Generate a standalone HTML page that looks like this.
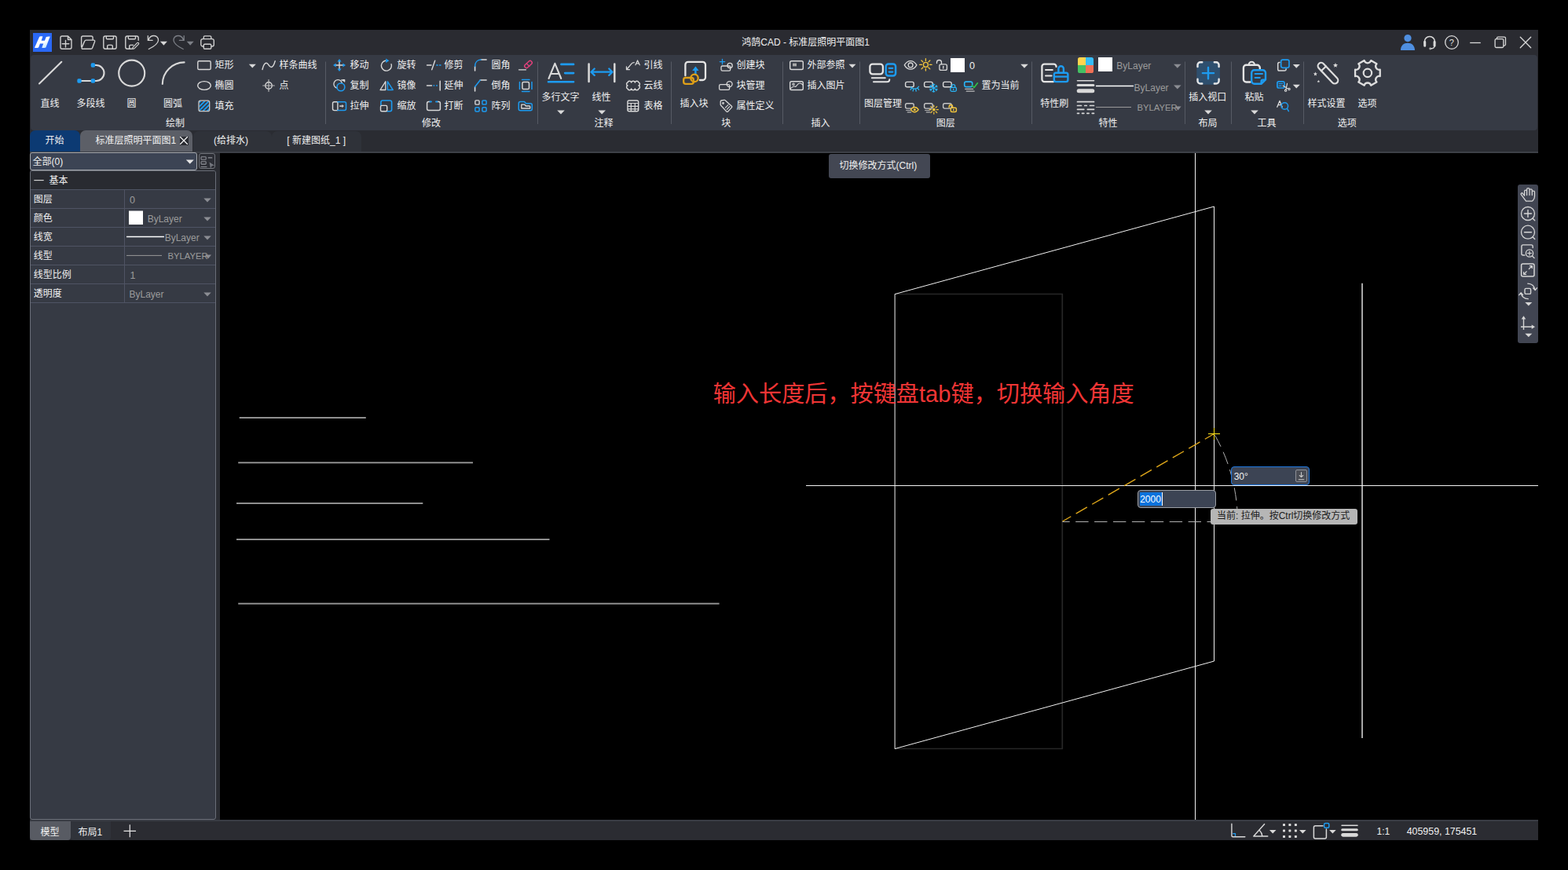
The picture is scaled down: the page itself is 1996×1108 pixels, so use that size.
<!DOCTYPE html>
<html lang="zh-CN"><head><meta charset="utf-8"><title>鸿鹄CAD - 标准层照明平面图1</title><style>
html,body{margin:0;padding:0;background:#000}
body{width:1996px;height:1108px;position:relative;overflow:hidden;font-family:"Liberation Sans",sans-serif}
#bg div,#bg2 div{position:absolute;box-sizing:border-box}
#art,#art2{position:absolute;left:0;top:0}
.l{position:absolute;white-space:nowrap;line-height:1;font-size:12px;font-family:"Liberation Sans","Noto Sans CJK SC",sans-serif}
.t{position:absolute;white-space:nowrap;line-height:1.2}
</style></head>
<body>
<div id="bg">
<div style="left:38px;top:38px;width:1920px;height:32px;background:#2a2b31;"></div>
<div style="left:38px;top:70px;width:1920px;height:96px;background:#2a2b31;"></div>
<div style="left:39px;top:70px;width:1918px;height:96px;background:#363a44;border-radius:4px"></div>
<div style="left:38px;top:166px;width:1920px;height:27px;background:#2a2c32;"></div>
<div style="left:38px;top:193px;width:1920px;height:2px;background:#3d4047;"></div>
<div style="left:38px;top:166px;width:64px;height:27px;background:#0c3a73;border-radius:7px 7px 0 0"></div>
<div style="left:102px;top:166px;width:143px;height:27px;background:#5c5f67;border-radius:7px 7px 0 0"></div>
<div style="left:246px;top:167px;width:100px;height:26px;background:#2f3239;border-radius:7px 7px 0 0"></div>
<div style="left:346px;top:167px;width:114px;height:26px;background:#2f3239;border-radius:7px 7px 0 0"></div>
<div style="left:228.5px;top:173.5px;width:11px;height:11px;background:#2a2c32;"></div>
<div style="left:38px;top:195px;width:237px;height:849px;background:#2a2c32;"></div>
<div style="left:275px;top:195px;width:5px;height:849px;background:#2a2c32;"></div>
<div style="left:38px;top:193.5px;width:213px;height:23px;background:#3c4454;border:1px solid #a3a6ab;border-radius:3px"></div>
<div style="left:252.5px;top:195px;width:21px;height:20px;background:#2c2e35;border:1px solid #70737a;border-radius:3px"></div>
<div style="left:38px;top:217px;width:237px;height:827px;background:#363a44;border:1px solid #6a6e78;border-radius:3px"></div>
<div style="left:39px;top:218px;width:235px;height:23px;background:#292b31;border-radius:2px 2px 0 0"></div>
<div style="left:39px;top:241px;width:235px;height:1px;background:#4f5464;"></div>
<div style="left:39px;top:265px;width:235px;height:1px;background:#4f5464;"></div>
<div style="left:39px;top:289px;width:235px;height:1px;background:#4f5464;"></div>
<div style="left:39px;top:313px;width:235px;height:1px;background:#4f5464;"></div>
<div style="left:39px;top:337px;width:235px;height:1px;background:#4f5464;"></div>
<div style="left:39px;top:361px;width:235px;height:1px;background:#4f5464;"></div>
<div style="left:39px;top:385px;width:235px;height:1px;background:#4f5464;"></div>
<div style="left:158px;top:241px;width:1px;height:145px;background:#4f5464;"></div>
<div style="left:38px;top:1044px;width:1920px;height:26px;background:#2b2c32;"></div>
<div style="left:38px;top:1044px;width:1920px;height:2px;background:#393c44;"></div>
<div style="left:38px;top:1046px;width:52px;height:24px;background:#585b63;border-radius:0 0 4px 4px"></div>
<div style="left:90px;top:1046px;width:51px;height:24px;background:#30333a;border-radius:0 0 4px 4px"></div>
</div>
<svg id="art" width="1996" height="1108" viewBox="0 0 1996 1108" fill="none" stroke-linecap="round" stroke-linejoin="round">
<g stroke-width="1" shape-rendering="auto">
<path d="M1139.5 374.5H1352.3V953.5H1139.5" stroke="#272727" stroke-width="1.700"/>
<path d="M304.7 532H465.8" stroke="#8f8f8f" stroke-width="2" stroke-linecap="butt"/>
<path d="M303.2 589.2H602" stroke="#8f8f8f" stroke-width="2" stroke-linecap="butt"/>
<path d="M301 641H538.3" stroke="#8f8f8f" stroke-width="2" stroke-linecap="butt"/>
<path d="M301 687H699.5" stroke="#8f8f8f" stroke-width="2" stroke-linecap="butt"/>
<path d="M303.2 768.7H915.6" stroke="#8f8f8f" stroke-width="2" stroke-linecap="butt"/>
<path d="M1734 360.7V940" stroke="#a6a6a6" stroke-width="2" stroke-linecap="butt"/>
<path d="M1139.5 374.5L1545.5 263V842L1139.5 953.5Z" stroke="#f2f2f2" stroke-linejoin="miter"/>
<path d="M1521.5 195V1044M1026 618.5H1958" stroke="#f2f2f2" stroke-linecap="butt"/>
<path d="M1352.5 664L1545.5 552.5" stroke="#e0a81a" stroke-width="1.4" stroke-dasharray="16.4 7.300" stroke-dashoffset="3.900" stroke-linecap="butt"/>
<path d="M1352.5 664.5H1541" stroke="#b0b0b0" stroke-dasharray="16.400 7.500" stroke-dashoffset="7.200" stroke-linecap="butt"/>
<path d="M1545.5 552.5A223 223 0 0 1 1575.4 664" stroke="#b0b0b0" stroke-dasharray="16.400 7.500" stroke-dashoffset="21.900" stroke-linecap="butt"/>
<path d="M1538 552.5H1553M1545.5 545V560" stroke="#ffe61a" stroke-linecap="butt"/>
</g>
<defs><linearGradient id="lg" x1="0" y1="0" x2="1" y2="1"><stop offset="0" stop-color="#fff"/><stop offset=".55" stop-color="#fff"/><stop offset="1" stop-color="#9fd8ff"/></linearGradient></defs>
<path d="M42 42h24v24h-24z" fill="#2a68f5" stroke="none"/>
<path d="M50.2 46.8c1.2-.5 3.2-.6 4.2-.2l-1.8 5.1h4.3l1.9-4.7c1.300-.600 3.400-.800 4.900-.400l-5.300 13.800c-1.400.700-3.700.800-5.100.400l2-5.300h-4.300l-1.900 4.900c-1.500.700-3.600.800-5.100.400z" fill="url(#lg)" stroke="none"/>
<path d="M79 46h7.500l4.500 4.500v9.700a2 2 0 0 1-2 2h-10a2 2 0 0 1-2-2v-12.200a2 2 0 0 1 2-2zM86.500 46.300v4.200h4.200M79.200 55.800h8.600M83.500 51.500v8.600" stroke="#cfcfcf" stroke-width="1.4"/>
<path d="M103.600 59.500v-11.500a2 2 0 0 1 2-2h10.500a2 2 0 0 1 2 2v2.200M105.700 62.200h10a2 2 0 0 0 1.900-1.300l3-8a1.300 1.300 0 0 0-1.200-1.800h-9.800a2 2 0 0 0-1.900 1.300l-3.600 8.200a1.200 1.200 0 0 0 1.600 1.600z" stroke="#cfcfcf" stroke-width="1.4"/>
<path d="M134 46h12a2.200 2.200 0 0 1 2.200 2.200v11.800a2.200 2.200 0 0 1-2.200 2.200h-12a2.200 2.200 0 0 1-2.200-2.200v-11.800a2.200 2.200 0 0 1 2.200-2.200zM135.300 46.200v2.300a1.200 1.200 0 0 0 1.200 1.200h6.800a1.200 1.200 0 0 0 1.200-1.200v-2.300M136.700 62v-3.200a1.400 1.400 0 0 1 1.400-1.400h3.800a1.400 1.400 0 0 1 1.400 1.400v3.200" stroke="#cfcfcf" stroke-width="1.4"/>
<path d="M176.200 51.300v-3.100a2.200 2.200 0 0 0-2.200-2.200h-12a2.200 2.200 0 0 0-2.200 2.200v11.800a2.200 2.200 0 0 0 2.200 2.200h5.500M163.300 46.200v2.300a1.200 1.200 0 0 0 1.200 1.200h6.800a1.200 1.200 0 0 0 1.200-1.200v-2.300M164.700 62v-3.200a1.400 1.400 0 0 1 1.400-1.400h3.400" stroke="#cfcfcf" stroke-width="1.4"/>
<path d="M168.600 62.300l.600-2.200l5.400-5.400a1.150 1.150 0 0 1 1.700 1.700l-5.400 5.400z" stroke="#cfcfcf" stroke-width="1.2"/>
<path d="M188.300 45.600v5.800h5.800M189 51c1-3.300 3.800-5.500 7-5.500c3.400 0 5.800 2.600 5.500 6c-.4 4.500-6 8-12.200 11" stroke="#cfcfcf" stroke-width="1.3"/>
<path d="M203.900 52.800h9l-4.500 4.900z" fill="#d6d6d6" stroke="none"/>
<path d="M234.200 45.600v5.800h-5.800M233.500 51c-1-3.300-3.800-5.500-7-5.500c-3.400 0-5.800 2.600-5.500 6c.4 4.500 6 8 12.200 11" stroke="#7d8087" stroke-width="1.3"/>
<path d="M237.700 52.800h9l-4.500 4.900z" fill="#7d8087" stroke="none"/>
<path d="M259.300 49.500v-2.200a1.400 1.400 0 0 1 1.400-1.400h6.700a1.400 1.400 0 0 1 1.400 1.400v2.200M259.300 59h-1.300a2.200 2.200 0 0 1-2.200-2.200v-5a2.200 2.200 0 0 1 2.200-2.200h12.100a2.200 2.200 0 0 1 2.200 2.200v5a2.200 2.200 0 0 1-2.200 2.200h-1.300M260.700 56.200h6.700a1.400 1.400 0 0 1 1.400 1.400v3.300a1.400 1.400 0 0 1-1.400 1.400h-6.700a1.400 1.400 0 0 1-1.400-1.400v-3.300a1.400 1.400 0 0 1 1.400-1.400z" stroke="#cfcfcf" stroke-width="1.4"/>
<path d="M50 106.500L78.300 78.800" stroke="#d9d9d9" stroke-width="2.1"/>
<path d="M101 103h21.500a10 10 0 0 0 0-20h-4" stroke="#d9d9d9" stroke-width="2.1"/>
<rect x="115.7" y="80.3" width="5.400" height="5.400" rx="1.600" fill="#1d9bf0" stroke="none"/>
<rect x="98.3" y="100.3" width="5.400" height="5.400" rx="1.600" fill="#1d9bf0" stroke="none"/>
<rect x="115.7" y="100.3" width="5.400" height="5.400" rx="1.600" fill="#1d9bf0" stroke="none"/>
<circle cx="167.7" cy="93.1" r="16.5" stroke="#d9d9d9" stroke-width="2.1"/>
<path d="M206.800 107a28 28 0 0 1 27.800-27.600" stroke="#d9d9d9" stroke-width="2.1"/>
<rect x="251.8" y="77.8" width="16.4" height="10.7" rx="1.6" stroke="#d9d9d9" stroke-width="1.4"/>
<ellipse cx="260" cy="109" rx="8.300" ry="5.400" stroke="#d9d9d9" stroke-width="1.400"/>
<clipPath id="hc"><rect x="253.700" y="128.900" width="12.300" height="12" rx="1"/></clipPath>
<g clip-path="url(#hc)"><path d="M248 136.200l12-12M250 139.400l16-16M253 141.600l16-16M257.500 142.300l14-14M262.700 142.300l8-8" stroke="#1d9bf0" stroke-width="1.900" stroke-linecap="butt"/></g>
<rect x="253" y="128.2" width="13.7" height="13.4" rx="2.2" stroke="#c9c9c9" stroke-width="1.3"/>
<path d="M316.8 81.7h9l-4.500 4.900z" fill="#d9d9d9" stroke="none"/>
<path d="M334 88.500c1.500-6.500 3.200-8.200 5-8.200c2.800 0 3.300 5.200 6.200 5.200c2 0 3.600-2.800 5-7.800" stroke="#d9d9d9" stroke-width="1.4"/>
<circle cx="342" cy="109" r="4.2" stroke="#d9d9d9" stroke-width="1.4"/>
<path d="M334.700 109h14.600M342 101.700v14.600" stroke="#bdbdbd" stroke-width="1.2"/>
<path d="M414.500 78.500V158" stroke="#565a64" stroke-width="1" stroke-linecap="butt"/>
<path d="M427 83h10M432 78v10" stroke="#d9d9d9" stroke-width="1.4"/>
<path d="M432 75l2.600 3.600h-5.200z" fill="#1d9bf0" stroke="none" transform="rotate(0 432 83)"/>
<path d="M432 75l2.600 3.600h-5.200z" fill="#1d9bf0" stroke="none" transform="rotate(90 432 83)"/>
<path d="M432 75l2.600 3.600h-5.200z" fill="#1d9bf0" stroke="none" transform="rotate(180 432 83)"/>
<path d="M432 75l2.600 3.600h-5.200z" fill="#1d9bf0" stroke="none" transform="rotate(270 432 83)"/>
<circle cx="430.2" cy="107" r="5.3" stroke="#d9d9d9" stroke-width="1.3"/>
<path d="M434.500 101.800c1.500.100 2.800.700 3.900 1.700M436.200 101.600h2.500v2.500" stroke="#d9d9d9" stroke-width="1.2"/>
<circle cx="433.9" cy="110.9" r="4.9" stroke="#1d9bf0" stroke-width="1.6" fill="#363a44"/>
<path d="M429.900 129.700h-4.400a2 2 0 0 0-2 2v6.900a2 2 0 0 0 2 2h4.400z" stroke="#d9d9d9" stroke-width="1.4"/>
<path d="M429.900 129.700h8.600a2 2 0 0 1 2 2v6.900a2 2 0 0 1-2 2h-8.600" stroke="#1d9bf0" stroke-width="1.5"/>
<path d="M432.200 135.100h3.300" stroke="#d9d9d9" stroke-width="1.5" stroke-linecap="butt"/>
<path d="M435.300 132.900l2.600 2.200l-2.600 2.200z" fill="#d9d9d9" stroke="none"/>
<path d="M490.500 77.300a6.500 6.500 0 1 0 7.600 4.300" stroke="#d9d9d9" stroke-width="1.4"/>
<path d="M491.200 74.600l4.200 2.700l-4.200 2.600z" fill="#1d9bf0" stroke="none"/>
<path d="M490.800 103.800v10.700h-6.800z" stroke="#d9d9d9" stroke-width="1.3"/>
<path d="M493.400 103.800v10.700h6.800z" stroke="#1d9bf0" stroke-width="1.4"/>
<path d="M484.900 134v-3.800a2.200 2.200 0 0 1 2.200-2.200h9.300a2.200 2.200 0 0 1 2.200 2.200v9.400a2.200 2.200 0 0 1-2.200 2.200h-3.500" stroke="#1d9bf0" stroke-width="1.6"/>
<rect x="484.5" y="134.4" width="8.2" height="7.4" rx="1.5" stroke="#d9d9d9" stroke-width="1.4"/>
<path d="M543.500 83h5.500M549.700 88.800l4-11.600" stroke="#d9d9d9" stroke-width="1.4"/>
<path d="M555.300 83h6.200" stroke="#1d9bf0" stroke-width="1.4" stroke-dasharray="2.400 1.400" stroke-linecap="butt"/>
<path d="M543.500 109h6M560.200 103.200v11.800" stroke="#d9d9d9" stroke-width="1.5"/>
<path d="M551.500 109h7" stroke="#1d9bf0" stroke-width="1.4" stroke-dasharray="1.800 1.800" stroke-linecap="butt"/>
<path d="M547 129.500h-1.400a2 2 0 0 0-2 2v7a2 2 0 0 0 2 2h12.800a2 2 0 0 0 2-2v-7a2 2 0 0 0-2-2h-1.400" stroke="#d9d9d9" stroke-width="1.5"/>
<path d="M547.500 129.500h1.500M555 129.500h1.500" stroke="#1d9bf0" stroke-width="1.8"/>
<path d="M604.600 84.500v5.500M612.300 76h6.800" stroke="#d9d9d9" stroke-width="1.6"/>
<path d="M604.600 84.500c0-5 3-8.500 7.700-8.500" stroke="#1d9bf0" stroke-width="1.5"/>
<path d="M604.600 110.500v5.500M611.300 102h7.800" stroke="#d9d9d9" stroke-width="1.6"/>
<path d="M604.600 110.500l6.700-8.500" stroke="#1d9bf0" stroke-width="1.5"/>
<rect x="604.9" y="127.900" width="5.2" height="5.2" rx="1.2" stroke="#d9d9d9" stroke-width="1.4"/>
<rect x="613.9" y="127.900" width="5.2" height="5.2" rx="1.2" stroke="#1d9bf0" stroke-width="1.5"/>
<rect x="604.9" y="136.700" width="5.2" height="5.2" rx="1.2" stroke="#1d9bf0" stroke-width="1.5"/>
<rect x="613.9" y="136.700" width="5.2" height="5.2" rx="1.2" stroke="#1d9bf0" stroke-width="1.5"/>
<path d="M660.500 88.800h9" stroke="#d9d9d9" stroke-width="1.3"/>
<rect x="667" y="79.600" width="11" height="4.800" rx="2.200" stroke="#e5407c" stroke-width="1.400" transform="rotate(-42 672.500 82)"/>
<path d="M670.600 81.300l3.400 3.200" stroke="#e5407c" stroke-width="1.2"/>
<rect x="664.9" y="104.500" width="8.6" height="9" rx="1.6" stroke="#d9d9d9" stroke-width="1.5"/>
<path d="M664.500 101.500h9.500M664.500 116.500h9.500M661.500 104.500v9M677 104.500v9" stroke="#1d9bf0" stroke-width="1.5"/>
<path d="M662.300 129.500h5.200l2 2.200h5.800a2 2 0 0 1 2 2v5a2 2 0 0 1-2 2h-13a2 2 0 0 1-2-2v-7.200a2 2 0 0 1 2-2z" stroke="#1d9bf0" stroke-width="1.5"/>
<path d="M663.800 138v-4.800h4l1.500 1.800h4.500a1 1 0 0 1 1 1v2z" stroke="#d9d9d9" stroke-width="1.3"/>
<path d="M684.500 78.500V158" stroke="#565a64" stroke-width="1" stroke-linecap="butt"/>
<path d="M698.500 100l7.900-19.200l7.900 19.200M701.500 94h9.800" stroke="#d9d9d9" stroke-width="2.1"/>
<path d="M714.400 81.900h15.700M719.200 93.100h10.900M698 104.300h32.100" stroke="#1d9bf0" stroke-width="2.6"/>
<path d="M709.200 140.600h9.600l-4.800 5z" fill="#d9d9d9" stroke="none"/>
<path d="M749.600 81.600v22.500M782.300 81.600v22.500" stroke="#d9d9d9" stroke-width="2.5"/>
<path d="M753 91.700h26M756.700 87.500l-4.200 4.200l4.200 4.200M775.300 87.500l4.200 4.200l-4.200 4.200" stroke="#1d9bf0" stroke-width="2.3"/>
<path d="M761.400 140.600h9.600l-4.800 5z" fill="#d9d9d9" stroke="none"/>
<path d="M797.700 88.500l6-7.200c.8-1 1.700-1.600 3.500-1.600M797.500 84.800v3.900h3.900" stroke="#d9d9d9" stroke-width="1.3"/>
<path d="M808.900 82.800l2.700-5.900l2.700 5.900M809.800 80.900h3.600" stroke="#d9d9d9" stroke-width="1.2"/>
<path d="M799 105a2.450 2.450 0 0 1 4.670 0a2.450 2.450 0 0 1 4.670 0a2.450 2.450 0 0 1 4.670 0a2.100 2.100 0 0 1 0 4a2.100 2.100 0 0 1 0 4a2.450 2.450 0 0 1-4.670 0a2.450 2.450 0 0 1-4.670 0a2.450 2.450 0 0 1-4.670 0a2.100 2.100 0 0 1 0-4a2.100 2.100 0 0 1 0-4z" stroke="#d9d9d9" stroke-width="1.4"/>
<rect x="798.9" y="128" width="13.8" height="13.8" rx="2" stroke="#d9d9d9" stroke-width="1.4"/>
<path d="M799 131.500h13.600M799 135.300h13.600M799 138.900h13.600M803.300 131.500v10.200M808.300 131.500v10.200" stroke="#d9d9d9" stroke-width="1.2" stroke-linecap="butt"/>
<path d="M854.500 78.500V158" stroke="#565a64" stroke-width="1" stroke-linecap="butt"/>
<path d="M872.400 96.300v-13.900a3.500 3.500 0 0 1 3.500-3.500h18.600a3.500 3.500 0 0 1 3.500 3.500v16.100a3.500 3.500 0 0 1-3.500 3.500h-3.600" stroke="#e4e4e4" stroke-width="2.3"/>
<path d="M885.400 94.500v-6" stroke="#1d9bf0" stroke-width="2.4"/>
<path d="M885.400 84.600l4.200 5.400h-8.400z" fill="#1d9bf0" stroke="none" stroke="#1d9bf0" stroke-width="1" stroke-linejoin="round"/>
<rect x="870.2" y="99" width="12.6" height="7.8" rx="2.6" stroke="#dfa018" stroke-width="2.3"/>
<circle cx="884" cy="99.4" r="4.7" stroke="#dfa018" stroke-width="2.3"/>
<path d="M916.300 78.600h6.400M919.500 75.400v6.400" stroke="#1d9bf0" stroke-width="1.3"/>
<rect x="918" y="84" width="11.7" height="6.1" rx="1.6" stroke="#d9d9d9" stroke-width="1.3"/>
<circle cx="929.1" cy="83.500" r="3.1" stroke="#d9d9d9" stroke-width="1.3"/>
<rect x="915.6" y="107.600" width="13" height="6.7" rx="1.6" stroke="#d9d9d9" stroke-width="1.3"/>
<circle cx="928.6" cy="107.1" r="3.5" stroke="#d9d9d9" stroke-width="1.3"/>
<path d="M917.200 129.200a1.300 1.300 0 0 1 1.100-1.200l3.600-.600a1.800 1.800 0 0 1 1.500.500l8 7.300a1.200 1.200 0 0 1 0 1.700l-4.800 5.200a1.200 1.200 0 0 1-1.700 0l-7.200-7.800a1.800 1.800 0 0 1-.5-1.300z" stroke="#d9d9d9" stroke-width="1.3"/>
<circle cx="920.5" cy="131.500" r="0.9" stroke="#d9d9d9" stroke-width="1.1"/>
<path d="M923.400 137.200l3.500-3.600M925.300 139.300l3.500-3.600" stroke="#d9d9d9" stroke-width="1.1"/>
<path d="M996.500 78.500V158" stroke="#565a64" stroke-width="1" stroke-linecap="butt"/>
<rect x="1005.7" y="77.700" width="16.6" height="10.8" rx="1.8" stroke="#d9d9d9" stroke-width="1.4"/>
<path d="M1009 80.600h5v3.800h-5z" fill="#a9a9a9" stroke="none"/>
<path d="M1080.500 81.700h9l-4.500 4.900z" fill="#d9d9d9" stroke="none"/>
<rect x="1005.7" y="103.700" width="16.6" height="10.8" rx="1.8" stroke="#d9d9d9" stroke-width="1.4"/>
<circle cx="1010" cy="107.2" r="1.2" stroke="#d9d9d9" stroke-width="1.1"/>
<path d="M1006.500 112.500c2-1.500 3.200-2.500 4.500-2.500c.8 0 1.500.600 2 .300c1-.700 2.500-4.300 5-4.300c1.500 0 3 1 4 2" stroke="#d9d9d9" stroke-width="1.2"/>
<path d="M1094.500 78.500V158" stroke="#565a64" stroke-width="1" stroke-linecap="butt"/>
<rect x="1107.4" y="81.600" width="16.5" height="12.7" rx="3.2" stroke="#e4e4e4" stroke-width="2.3"/>
<rect x="1127.7" y="81.500" width="12.4" height="15" rx="3.2" stroke="#1d9bf0" stroke-width="2.5"/>
<path d="M1131.700 86.800h4.600M1131.700 91.600h4.600" stroke="#1d9bf0" stroke-width="2.2"/>
<path d="M1109.800 99.300h17M1112 104.300h17.300c2 0 3-1.200 3-3" stroke="#e4e4e4" stroke-width="2"/>
<path d="M1151.300 82.900c2-3.400 4.700-5.300 7.800-5.300c3.100 0 5.800 1.900 7.800 5.300c-2 3.400-4.700 5.300-7.800 5.300c-3.100 0-5.800-1.900-7.800-5.300z" stroke="#d9d9d9" stroke-width="1.3"/>
<circle cx="1159.1" cy="82.900" r="2.9" stroke="#d9d9d9" stroke-width="1.3"/>
<circle cx="1178.4" cy="82.400" r="3" stroke="#f4c63c" stroke-width="1.3"/>
<path d="M1183.4 82.400L1186.1 82.400M1181.94 85.940L1183.84 87.840M1178.4 87.400L1178.4 90.1M1174.86 85.940L1172.96 87.840M1173.4 82.400L1170.7 82.400M1174.86 78.860L1172.96 76.960M1178.4 77.400L1178.4 74.700M1181.94 78.860L1183.84 76.960" stroke="#f4c63c" stroke-width="1.3"/>
<rect x="1195.9" y="81.900" width="9.5" height="7.5" rx="2" stroke="#d9d9d9" stroke-width="1.3"/>
<path d="M1200.700 84.300v2.800" stroke="#d9d9d9" stroke-width="1.3"/>
<path d="M1198.500 81.700v-2.200a3 3 0 0 0-6 0v1" stroke="#d9d9d9" stroke-width="1.3"/>
<path d="M1210 74h18v18h-18z" fill="#fff" stroke="none"/>
<path d="M1299.2 81.700h9.600l-4.800 5z" fill="#d9d9d9" stroke="none"/>
<rect x="1152.6" y="104.400" width="10.6" height="6.3" rx="2" stroke="#d9d9d9" stroke-width="1.4"/>
<path d="M1159.300 110.800c2.500 3.300 7.500 3.300 10.200-.500M1160.300 112.300l-1.300 2M1162.800 113.600l-.700 2.400M1165.700 113.700l.5 2.400M1168.300 112.300l1.400 2" stroke="#29b4f5" stroke-width="1.3"/>
<rect x="1176.6" y="104.400" width="10.6" height="6.3" rx="2" stroke="#d9d9d9" stroke-width="1.4"/>
<path d="M1188.4 106.9L1188.4 117.3M1192.9 109.5L1183.9 114.700M1192.9 114.700L1183.9 109.500M1188.4 115.320L1189.75 116.770M1188.4 115.320L1187.05 116.770M1185.61 113.710L1185.03 115.600M1185.61 113.710L1183.68 113.270M1185.61 110.490L1183.68 110.930M1185.61 110.490L1185.03 108.600M1188.4 108.880L1187.05 107.430M1188.4 108.880L1189.75 107.430M1191.19 110.490L1191.77 108.600M1191.19 110.490L1193.12 110.930M1191.19 113.710L1193.12 113.270M1191.19 113.710L1191.77 115.600" stroke="#29b4f5" stroke-width="1.1"/>
<rect x="1200.6" y="104.400" width="10.6" height="6.3" rx="2" stroke="#d9d9d9" stroke-width="1.4"/>
<rect x="1209.9" y="111.3" width="7.5" height="5" rx="1.5" stroke="#29b4f5" stroke-width="1.3"/>
<path d="M1211.700 111.200v-1.500a2 2 0 0 1 4 0v1.500M1213.700 113.200v1.200" stroke="#29b4f5" stroke-width="1.3"/>
<rect x="1227.7" y="104.1" width="10" height="6.5" rx="2" stroke="#29b4f5" stroke-width="1.6"/>
<path d="M1228.700 113.300h10M1230.200 116.100h10" stroke="#bdbdbd" stroke-width="1.3"/>
<path d="M1237.400 109l2.600 2.500l4.400-5.700" stroke="#2fc04c" stroke-width="1.7"/>
<rect x="1152.6" y="131.800" width="10.6" height="6.3" rx="2" stroke="#c6c6c6" stroke-width="1.4"/>
<path d="M1153.700 140.500h5.500M1155.200 142.800h4.500" stroke="#b5b5b5" stroke-width="1.2"/>
<path d="M1159.400 139.700c1.500-2.200 3.200-3.200 4.900-3.200c1.700 0 3.400 1 4.900 3.200c-1.500 2.200-3.200 3.200-4.900 3.200c-1.700 0-3.400-1-4.900-3.200z" stroke="#f4c63c" stroke-width="1.3" fill="#363a44"/>
<path d="M1164.300 138.200a1.500 1.500 0 1 0 .01 0z" fill="#f4c63c" stroke="none"/>
<rect x="1176.6" y="131.800" width="10.6" height="6.3" rx="2" stroke="#c6c6c6" stroke-width="1.4"/>
<path d="M1177.700 140.500h5.500M1179.200 142.800h4.500" stroke="#b5b5b5" stroke-width="1.2"/>
<path d="M1188.800 137.700a1.900 1.900 0 1 0 .01 0z" fill="#f4c63c" stroke="none"/>
<path d="M1192.2 139.600L1194.4 139.600M1191.2 142L1192.76 143.560M1188.8 143L1188.8 145.200M1186.4 142L1184.84 143.560M1185.4 139.600L1183.2 139.600M1186.4 137.200L1184.84 135.640M1188.8 136.200L1188.8 134M1191.2 137.200L1192.76 135.640" stroke="#f4c63c" stroke-width="1.2"/>
<rect x="1200.6" y="131.800" width="10.6" height="6.3" rx="2" stroke="#c6c6c6" stroke-width="1.4"/>
<rect x="1210.3" y="137.200" width="7.1" height="5.3" rx="1.5" stroke="#f4c63c" stroke-width="1.4" fill="#363a44"/>
<path d="M1212.600 137v-1.300a2.200 2.200 0 0 0-4.400 0v1.300M1213.800 139.200v1.300" stroke="#f4c63c" stroke-width="1.4"/>
<path d="M1313.500 78.500V158" stroke="#565a64" stroke-width="1" stroke-linecap="butt"/>
<path d="M1344.500 85v-.400a3 3 0 0 0-3-3h-12.100a3 3 0 0 0-3 3v16.500a3 3 0 0 0 3 3h11.600" stroke="#e4e4e4" stroke-width="2.3"/>
<path d="M1331 89.100h8.800M1331 96.500h7.600" stroke="#e4e4e4" stroke-width="2"/>
<path d="M1347.400 92.500v-5a3.200 3.200 0 0 1 6.500 0v5M1344.100 92.800h13a2.300 2.300 0 0 1 2.300 2.300v6.700a2.300 2.300 0 0 1-2.300 2.300h-13a2.300 2.300 0 0 1-2.300-2.300v-6.700a2.300 2.300 0 0 1 2.300-2.300zM1342 97.600h17" stroke="#1d9bf0" stroke-width="2.4"/>
<clipPath id="cg"><rect x="1372" y="73" width="20" height="20" rx="2.600"/></clipPath>
<g clip-path="url(#cg)" stroke="none"><rect x="1372" y="73" width="10" height="10" fill="#ffd44f"/><rect x="1382" y="73" width="10" height="10" fill="#36bdfb"/><rect x="1372" y="83" width="10" height="10" fill="#44c063"/><rect x="1382" y="83" width="10" height="10" fill="#f07055"/></g>
<path d="M1398 73h18v18h-18z" fill="#fff" stroke="none"/>
<path d="M1494 81.700h9.600l-4.800 5z" fill="#8b8d93" stroke="none"/>
<path d="M1371.500 102.700h21" stroke="#d9d9d9" stroke-width="1.6"/>
<path d="M1372.200 108.500h19.600" stroke="#d9d9d9" stroke-width="3.2"/>
<path d="M1373.200 115.700h17.600" stroke="#d9d9d9" stroke-width="5"/>
<path d="M1395 109.400h48" stroke="#ffffff" stroke-width="1.5" stroke-linecap="butt"/>
<path d="M1494 108.600h9.600l-4.800 5z" fill="#8b8d93" stroke="none"/>
<path d="M1371.500 129.700h21M1371.500 134.500h5M1380.700 134.500h2.600M1387.500 134.500h5M1371.500 139.300h8.300M1384.300 139.300h8.200M1371.500 144.300h2M1377.500 144.300h2.300M1383.800 144.300h2.300M1390.300 144.300h2.200" stroke="#d9d9d9" stroke-width="1.7"/>
<path d="M1395 136.500h45" stroke="#9a9a9a" stroke-width="1" stroke-linecap="butt"/>
<path d="M1495.600 135.600h8l-4 5z" fill="#8b8d93" stroke="none"/>
<path d="M1508.500 78.500V158" stroke="#565a64" stroke-width="1" stroke-linecap="butt"/>
<rect x="1523.300" y="78" width="29.600" height="29.700" rx="4.500" fill="#2e4f6e" stroke="none"/>
<path d="M1524.500 85v-2.300a3.500 3.500 0 0 1 3.500-3.500h2.300M1545.800 79.200h2.300a3.500 3.500 0 0 1 3.500 3.500v2.300M1551.600 100.700v2.300a3.500 3.500 0 0 1-3.500 3.500h-2.300M1530.300 106.500h-2.300a3.500 3.500 0 0 1-3.500-3.500v-2.300" stroke="#e6e6e6" stroke-width="2.4"/>
<path d="M1530.900 93.100h14.200M1538 86v14.200" stroke="#1d9bf0" stroke-width="2.4"/>
<path d="M1533.200 140.600h9.600l-4.800 5z" fill="#d9d9d9" stroke="none"/>
<path d="M1567.500 78.500V158" stroke="#565a64" stroke-width="1" stroke-linecap="butt"/>
<path d="M1603.800 87.500v-1.200a3.500 3.500 0 0 0-3.500-3.500h-13.900a3.500 3.500 0 0 0-3.500 3.500v14.700a3.500 3.500 0 0 0 3.500 3.500h5" stroke="#e4e4e4" stroke-width="2.4"/>
<path d="M1589.700 82.300a3.600 3.600 0 0 1 7.200 0" stroke="#e4e4e4" stroke-width="2"/>
<path d="M1596.700 89.300h10.800a3.500 3.500 0 0 1 3.500 3.500v8.500l-5.500 5.500h-8.800a3.500 3.500 0 0 1-3.500-3.500v-10.500a3.500 3.500 0 0 1 3.500-3.500zM1611 101.600h-3.400a2 2 0 0 0-2 2v3.200" stroke="#1d9bf0" stroke-width="2.4"/>
<path d="M1597.600 94h9.400M1597.600 99h6.200" stroke="#1d9bf0" stroke-width="2"/>
<path d="M1592.2 140.600h9.600l-4.800 5z" fill="#d9d9d9" stroke="none"/>
<path d="M1629 79.600h-.500a1.800 1.800 0 0 0-1.800 1.800v6.800a1.800 1.800 0 0 0 1.800 1.800h6.800a1.800 1.800 0 0 0 1.800-1.800v-.5" stroke="#d9d9d9" stroke-width="1.5"/>
<rect x="1630.7" y="76.1" width="10.3" height="10.2" rx="2.2" stroke="#1d9bf0" stroke-width="1.7"/>
<path d="M1645.800 82h9l-4.500 4.800z" fill="#d9d9d9" stroke="none"/>
<rect x="1625.9" y="103.800" width="9.1" height="8.2" rx="2" stroke="#1d9bf0" stroke-width="1.7"/>
<path d="M1628 106.600h4.700M1628 109.400h3" stroke="#1d9bf0" stroke-width="1.2"/>
<path d="M1633.200 109.200l6.300 3.500M1638.500 106.300l-1.500 7.600" stroke="#d9d9d9" stroke-width="1.2"/>
<circle cx="1641" cy="113.600" r="1.2" stroke="#d9d9d9" stroke-width="1.1"/>
<circle cx="1636.6" cy="115.3" r="1.2" stroke="#d9d9d9" stroke-width="1.1"/>
<path d="M1645.800 107.800h9l-4.500 4.800z" fill="#d9d9d9" stroke="none"/>
<path d="M1625.800 136.300l3.200-7.900l3.200 7.900M1627 133.700h4.100" stroke="#d9d9d9" stroke-width="1.3"/>
<circle cx="1635.3" cy="135" r="4.3" stroke="#1d9bf0" stroke-width="1.5"/>
<path d="M1638.400 138.200l2 3.400" stroke="#1d9bf0" stroke-width="1.5"/>
<path d="M1659.500 78.500V158" stroke="#565a64" stroke-width="1" stroke-linecap="butt"/>
<g transform="translate(1690.450 93.200) rotate(-43.300)" stroke="#dedede" stroke-width="2.200"><rect x="-4.150" y="-16.750" width="8.300" height="33.500" rx="4.150"/><path d="M-4.150 -8h8.300"/></g>
<path d="M1700 80L1700.85 82.040L1703.04 82.210L1701.37 83.640L1701.88 85.790L1700 84.640L1698.12 85.790L1698.63 83.640L1696.96 82.210L1699.15 82.040z" fill="#d9d9d9" stroke="none"/>
<path d="M1674.4 91.500L1675.11 93.220L1676.97 93.370L1675.56 94.580L1675.99 96.380L1674.4 95.420L1672.81 96.380L1673.24 94.580L1671.83 93.370L1673.69 93.220z" fill="#d9d9d9" stroke="none"/>
<path d="M1678.4 101.700L1678.9 102.910L1680.21 103.010L1679.21 103.860L1679.52 105.140L1678.4 104.450L1677.28 105.140L1677.59 103.860L1676.59 103.010L1677.9 102.910z" fill="#d9d9d9" stroke="none"/>
<path d="M1756.74 88.660L1756.74 97.140A4.400 4.400 0 0 0 1752.5 104.500L1752.5 104.500L1745.14 108.740A4.400 4.400 0 0 0 1736.66 108.740L1736.66 108.740L1729.3 104.500A4.400 4.400 0 0 0 1725.06 97.140L1725.06 97.140L1725.06 88.660A4.400 4.400 0 0 0 1729.3 81.300L1729.3 81.300L1736.66 77.060A4.400 4.400 0 0 0 1745.14 77.060L1745.14 77.060L1752.5 81.300A4.400 4.400 0 0 0 1756.74 88.660z" stroke="#dedede" stroke-width="2.3"/>
<circle cx="1740.9" cy="92.900" r="5.2" stroke="#dedede" stroke-width="2.2"/>
<path d="M1792 44a4.600 4.600 0 1 0 .01 0zM1783 64c0-6 4-9.200 9-9.200c5 0 9 3.200 9 9.200z" fill="#4f8fe0" stroke="none"/>
<path d="M1813.400 56v-3a6.500 6.500 0 0 1 13 0v3" stroke="#d9d9d9" stroke-width="1.5"/>
<path d="M1813.700 53.200v5M1826.100 53.200v5" stroke="#d9d9d9" stroke-width="3"/>
<path d="M1826 58.500c0 2.300-1.800 3.300-4.500 3.400" stroke="#d9d9d9" stroke-width="1.2"/>
<circle cx="1820.7" cy="61.900" r="1" stroke="#d9d9d9" stroke-width="1"/>
<circle cx="1848" cy="54" r="8.3" stroke="#d9d9d9" stroke-width="1.3"/>
<path d="M1871.200 54.500h13.600" stroke="#d9d9d9" stroke-width="1.3" stroke-linecap="butt"/>
<path d="M1905.500 49.600v-1a1.500 1.500 0 0 1 1.500-1.500h8a1.500 1.500 0 0 1 1.500 1.500v8a1.500 1.500 0 0 1-1.500 1.500h-1" stroke="#d9d9d9" stroke-width="1.3"/>
<rect x="1903.1" y="49.700" width="10.8" height="10.8" rx="1.5" stroke="#d9d9d9" stroke-width="1.3"/>
<path d="M1935.300 47.200l13.400 13.600M1948.700 47.200l-13.400 13.600" stroke="#d9d9d9" stroke-width="1.3"/>
<path d="M229.500 174.500l9 9M238.500 174.500l-9 9" stroke="#ffffff" stroke-width="1.1"/>
<path d="M43.300 229.600h12.400" stroke="#e0e0e0" stroke-width="1.1" stroke-linecap="butt"/>
<path d="M236.800 203.500h10l-5 5.200z" fill="#e6e6e6" stroke="none"/>
<path d="M259.300 252.500h9.400l-4.700 5z" fill="#8b8d93" stroke="none"/>
<path d="M259.300 276.500h9.400l-4.700 5z" fill="#8b8d93" stroke="none"/>
<path d="M259.300 300.500h9.400l-4.700 5z" fill="#8b8d93" stroke="none"/>
<path d="M259.300 372.500h9.400l-4.700 5z" fill="#8b8d93" stroke="none"/>
<path d="M261 324.500h8l-4 5z" fill="#8b8d93" stroke="none"/>
<path d="M164 268.500h18v17.500h-18z" fill="#fff" stroke="none"/>
<path d="M161 301.600h48" stroke="#ffffff" stroke-width="1.5" stroke-linecap="butt"/>
<path d="M161 325.400h45" stroke="#9a9a9a" stroke-width="1" stroke-linecap="butt"/>
<rect x="256" y="199.800" width="6.2" height="3.4" rx="0.8" stroke="#8e9198" stroke-width="1.1"/>
<rect x="256" y="205.700" width="6.2" height="3.4" rx="0.8" stroke="#8e9198" stroke-width="1.1"/>
<path d="M265.200 200.900h4.600" stroke="#8e9198" stroke-width="1.1"/>
<path d="M256 212.500h7" stroke="#8e9198" stroke-width="1.1"/>
<path d="M266.500 206.500l6.500 4.200l-3.300.600l-1.700 3.200z" fill="#74777e" stroke="none"/>
<path d="M157.500 1058.300h15.500M165.300 1050.300v16" stroke="#e6e6e6" stroke-width="1.2" stroke-linecap="butt"/>
<path d="M1567.900 1049.300v14.900a1.500 1.500 0 0 0 1.500 1.500h15.400" stroke="#d9d9d9" stroke-width="1.4"/>
<path d="M1569.200 1061.700h3.300v3.300" stroke="#1d9bf0" stroke-width="1.3" stroke-linecap="butt"/>
<path d="M1609.600 1049.500l-13.800 15.500h18M1603.500 1057.700c1.900 1.800 3.100 4.400 3.300 7.200" stroke="#d9d9d9" stroke-width="1.4"/>
<path d="M1615.900 1057h8.600l-4.300 4.600z" fill="#d9d9d9" stroke="none"/>
<rect x="1633" y="1049" width="3" height="3" rx=".6" fill="#d9d9d9" stroke="none"/>
<rect x="1633" y="1056.400" width="3" height="3" rx=".6" fill="#d9d9d9" stroke="none"/>
<rect x="1633" y="1063.900" width="3" height="3" rx=".6" fill="#d9d9d9" stroke="none"/>
<rect x="1640.4" y="1049" width="3" height="3" rx=".6" fill="#d9d9d9" stroke="none"/>
<rect x="1640.4" y="1056.400" width="3" height="3" rx=".6" fill="#d9d9d9" stroke="none"/>
<rect x="1640.4" y="1063.900" width="3" height="3" rx=".6" fill="#d9d9d9" stroke="none"/>
<rect x="1647.9" y="1049" width="3" height="3" rx=".6" fill="#d9d9d9" stroke="none"/>
<rect x="1647.9" y="1056.400" width="3" height="3" rx=".6" fill="#d9d9d9" stroke="none"/>
<rect x="1647.9" y="1063.900" width="3" height="3" rx=".6" fill="#d9d9d9" stroke="none"/>
<path d="M1654 1057h8.600l-4.300 4.600z" fill="#d9d9d9" stroke="none"/>
<path d="M1684 1051.700h-9.600a2 2 0 0 0-2 2v12.200a2 2 0 0 0 2 2h12a2 2 0 0 0 2-2v-10" stroke="#d9d9d9" stroke-width="1.5"/>
<rect x="1685.6" y="1048.600" width="6.2" height="5.7" rx="1.5" stroke="#1d9bf0" stroke-width="1.5"/>
<path d="M1692.1 1057h8.600l-4.300 4.600z" fill="#d9d9d9" stroke="none"/>
<path d="M1708 1051.200h20" stroke="#d9d9d9" stroke-width="1.5"/>
<path d="M1708.700 1056.700h18.600" stroke="#d9d9d9" stroke-width="3"/>
<path d="M1709.600 1063.300h16.800" stroke="#d9d9d9" stroke-width="4.8"/>
</svg>
<div id="bg2">
<div style="left:1932px;top:235px;width:26px;height:202px;background:#414552;border-radius:3px"></div>
<div style="left:1055px;top:195.5px;width:129px;height:31.5px;background:#434753;border-radius:3px"></div>
<div style="left:1567px;top:594px;width:100px;height:24px;background:#3c4454;border:1.5px solid #1f78e0;border-radius:4px"></div>
<div style="left:1649px;top:598px;width:15px;height:16px;background:#4a4d55;border:1px solid #8d9098;border-radius:2px"></div>
<div style="left:1448px;top:623.5px;width:100px;height:23.5px;background:#3c4454;border:1px solid #9b9ea4;border-radius:4px"></div>
<div style="left:1451px;top:627px;width:28.3px;height:17px;background:#0b72dc;"></div>
<div style="left:1479.3px;top:626.5px;width:1px;height:17.5px;background:#fff;"></div>
<div style="left:1541px;top:647.5px;width:187px;height:20.5px;background:#b6b6b6;border-radius:3px"></div>
</div>
<svg id="art2" width="1996" height="1108" viewBox="0 0 1996 1108" fill="none" stroke-linecap="round" stroke-linejoin="round">
<path d="M1940.600 249.200v-5.600a1.500 1.500 0 0 1 3 0v4.900M1943.600 246.500v-5.100a1.700 1.700 0 0 1 3.400 0v7.100M1947 246.500v-4a1.650 1.650 0 0 1 3.300 0v6M1950.300 247v-2.300a1.600 1.600 0 0 1 3.200 0v5.300c0 3-1.200 4.800-3.300 6.200h-7.600l-6.200-8.400a1.250 1.250 0 0 1 1.800-1.700l2.400 3.100" stroke="#d6d6d6" stroke-width="1.3"/>
<circle cx="1945" cy="272" r="8.5" stroke="#d6d6d6" stroke-width="1.3"/>
<path d="M1940.500 272h9M1945 267.500v9M1951.200 278.200l2.500 2.500" stroke="#d6d6d6" stroke-width="1.4"/>
<circle cx="1945" cy="295.700" r="8.5" stroke="#d6d6d6" stroke-width="1.3"/>
<path d="M1940.500 295.700h9M1951.200 301.900l2.500 2.500" stroke="#d6d6d6" stroke-width="1.4"/>
<path d="M1951.200 315.500v-1.600a2 2 0 0 0-2-2h-10.300a2 2 0 0 0-2 2v9.100a2 2 0 0 0 2 2h2" stroke="#d6d6d6" stroke-width="1.4"/>
<circle cx="1947" cy="322.500" r="4.6" stroke="#d6d6d6" stroke-width="1.3"/>
<path d="M1944.500 322.500h5M1947 320v5M1950.400 326l2.800 2.700" stroke="#d6d6d6" stroke-width="1.2"/>
<rect x="1936.6" y="335.900" width="16.4" height="16.2" rx="2" stroke="#d6d6d6" stroke-width="1.5"/>
<path d="M1946.300 342.500l4-3.800M1947.400 338.700h2.900v2.900M1943.300 345.800l-3.700 3.600M1942.500 349.400h-2.900v-2.900" stroke="#d6d6d6" stroke-width="1.2"/>
<rect x="1941" y="367.400" width="7.6" height="7" rx="1.5" stroke="#d6d6d6" stroke-width="1.4"/>
<path d="M1944.800 361.200c4.800.200 8.300 3.200 9.300 7.800M1951.700 366.800l2.500 2.800l2.300-2.900M1945.300 380.700c-4.800-.200-8.300-3.200-9.300-7.800M1933.800 375.700l2.300-2.900l2.500 2.800" stroke="#d6d6d6" stroke-width="1.3"/>
<path d="M1941.300 385.100h9l-4.500 4.500z" fill="#d6d6d6" stroke="none"/>
<path d="M1939.500 420v-15.500M1936 416.300h15" stroke="#d6d6d6" stroke-width="1.4" stroke-linecap="butt"/>
<path d="M1939.500 402.200l2.800 4.300h-5.600zM1954 416.300l-4.300 2.800v-5.600z" fill="#d6d6d6" stroke="none"/>
<path d="M1941.300 424.700h9l-4.500 4.500z" fill="#d6d6d6" stroke="none"/>
<path d="M1656.500 601.500v6M1654.300 605.500l2.200 2.200l2.200-2.200M1653.300 610.700h6.400" stroke="#c9c9c9" stroke-width="1.1"/>
</svg>
<div id="txt">
<span class="l" style="left:944.22px;top:47.96px;color:#f0f0f0">鸿鹄CAD - 标准层照明平面图1</span>
<span class="l" style="left:51.52px;top:126.46px;color:#f0f0f0">直线</span>
<span class="l" style="left:97.52px;top:126.46px;color:#f0f0f0">多段线</span>
<span class="l" style="left:161.52px;top:126.46px;color:#f0f0f0">圆</span>
<span class="l" style="left:208.02px;top:126.46px;color:#f0f0f0">圆弧</span>
<span class="l" style="left:273.52px;top:77.46px;color:#f0f0f0">矩形</span>
<span class="l" style="left:273.52px;top:103.46px;color:#f0f0f0">椭圆</span>
<span class="l" style="left:273.52px;top:129.46px;color:#f0f0f0">填充</span>
<span class="l" style="left:355.52px;top:77.46px;color:#f0f0f0">样条曲线</span>
<span class="l" style="left:355.52px;top:103.46px;color:#f0f0f0">点</span>
<span class="l" style="left:211.12px;top:151.46px;color:#f0f0f0">绘制</span>
<span class="l" style="left:445.52px;top:77.46px;color:#f0f0f0">移动</span>
<span class="l" style="left:445.52px;top:103.46px;color:#f0f0f0">复制</span>
<span class="l" style="left:445.52px;top:129.46px;color:#f0f0f0">拉伸</span>
<span class="l" style="left:505.52px;top:77.46px;color:#f0f0f0">旋转</span>
<span class="l" style="left:505.52px;top:103.46px;color:#f0f0f0">镜像</span>
<span class="l" style="left:505.52px;top:129.46px;color:#f0f0f0">缩放</span>
<span class="l" style="left:565.52px;top:77.46px;color:#f0f0f0">修剪</span>
<span class="l" style="left:565.52px;top:103.46px;color:#f0f0f0">延伸</span>
<span class="l" style="left:565.52px;top:129.46px;color:#f0f0f0">打断</span>
<span class="l" style="left:625.52px;top:77.46px;color:#f0f0f0">圆角</span>
<span class="l" style="left:625.52px;top:103.46px;color:#f0f0f0">倒角</span>
<span class="l" style="left:625.52px;top:129.46px;color:#f0f0f0">阵列</span>
<span class="l" style="left:536.92px;top:151.46px;color:#f0f0f0">修改</span>
<span class="l" style="left:689.52px;top:118.16px;color:#f0f0f0">多行文字</span>
<span class="l" style="left:753.52px;top:118.16px;color:#f0f0f0">线性</span>
<span class="l" style="left:819.52px;top:77.46px;color:#f0f0f0">引线</span>
<span class="l" style="left:819.52px;top:103.46px;color:#f0f0f0">云线</span>
<span class="l" style="left:819.52px;top:129.46px;color:#f0f0f0">表格</span>
<span class="l" style="left:756.52px;top:151.46px;color:#f0f0f0">注释</span>
<span class="l" style="left:865.52px;top:126.46px;color:#f0f0f0">插入块</span>
<span class="l" style="left:937.52px;top:77.46px;color:#f0f0f0">创建块</span>
<span class="l" style="left:937.52px;top:103.46px;color:#f0f0f0">块管理</span>
<span class="l" style="left:937.52px;top:129.46px;color:#f0f0f0">属性定义</span>
<span class="l" style="left:918.32px;top:151.46px;color:#f0f0f0">块</span>
<span class="l" style="left:1027.52px;top:77.46px;color:#f0f0f0">外部参照</span>
<span class="l" style="left:1027.52px;top:103.46px;color:#f0f0f0">插入图片</span>
<span class="l" style="left:1032.52px;top:151.46px;color:#f0f0f0">插入</span>
<span class="l" style="left:1099.92px;top:126.46px;color:#f0f0f0">图层管理</span>
<span class="l" style="left:1249.52px;top:103.46px;color:#f0f0f0">置为当前</span>
<span class="l" style="left:1191.82px;top:151.46px;color:#f0f0f0">图层</span>
<span class="l" style="left:1324.22px;top:126.46px;color:#f0f0f0">特性刷</span>
<span class="l" style="left:1398.52px;top:151.46px;color:#f0f0f0">特性</span>
<span class="l" style="left:1513.32px;top:118.16px;color:#f0f0f0">插入视口</span>
<span class="l" style="left:1525.52px;top:151.46px;color:#f0f0f0">布局</span>
<span class="l" style="left:1584.52px;top:118.16px;color:#f0f0f0">粘贴</span>
<span class="l" style="left:1600.52px;top:151.46px;color:#f0f0f0">工具</span>
<span class="l" style="left:1664.52px;top:126.46px;color:#f0f0f0">样式设置</span>
<span class="l" style="left:1728.52px;top:126.46px;color:#f0f0f0">选项</span>
<span class="l" style="left:1702.82px;top:151.46px;color:#f0f0f0">选项</span>
<span class="l" style="left:57.52px;top:173.26px;color:#f0f0f0">开始</span>
<span class="l" style="left:121.52px;top:173.26px;color:#f0f0f0">标准层照明平面图1</span>
<span class="l" style="left:271.92px;top:173.36px;color:#f0f0f0">(给排水)</span>
<span class="l" style="left:365.32px;top:173.36px;color:#f0f0f0">[ 新建图纸_1 ]</span>
<span class="l" style="left:41.52px;top:199.56px;color:#f0f0f0">全部(0)</span>
<span class="l" style="left:62.52px;top:223.86px;color:#f0f0f0">基本</span>
<span class="l" style="left:42.82px;top:247.66px;color:#f0f0f0">图层</span>
<span class="l" style="left:42.82px;top:271.66px;color:#f0f0f0">颜色</span>
<span class="l" style="left:42.82px;top:295.66px;color:#f0f0f0">线宽</span>
<span class="l" style="left:42.82px;top:319.66px;color:#f0f0f0">线型</span>
<span class="l" style="left:42.82px;top:343.66px;color:#f0f0f0">线型比例</span>
<span class="l" style="left:42.82px;top:367.66px;color:#f0f0f0">透明度</span>
<span class="l" style="left:51.52px;top:1053.56px;color:#f0f0f0">模型</span>
<span class="l" style="left:99.62px;top:1053.56px;color:#f0f0f0">布局1</span>
<span class="l" style="left:1068.52px;top:205.16px;color:#f0f0f0">切换修改方式(Ctrl)</span>
<span class="t" style="left:1234px;top:76.5px;font-size:12.5px;color:#f0f0f0;">0</span>
<span class="t" style="left:1421.3px;top:77.3px;font-size:12px;color:#9b9b9b;">ByLayer</span>
<span class="t" style="left:1443.6px;top:104.5px;font-size:12px;color:#9b9b9b;">ByLayer</span>
<span class="t" style="left:1447.5px;top:131.3px;font-size:11.3px;color:#9b9b9b;">BYLAYER</span>
<span class="t" style="left:165px;top:247.8px;font-size:12.5px;color:#9b9b9b;">0</span>
<span class="t" style="left:187.7px;top:272.3px;font-size:12px;color:#9b9b9b;">ByLayer</span>
<span class="t" style="left:209.7px;top:296.3px;font-size:12px;color:#9b9b9b;">ByLayer</span>
<span class="t" style="left:213.4px;top:320.3px;font-size:11.3px;color:#9b9b9b;">BYLAYER</span>
<span class="t" style="left:165.5px;top:343.8px;font-size:12.5px;color:#9b9b9b;">1</span>
<span class="t" style="left:164.5px;top:368.3px;font-size:12px;color:#9b9b9b;">ByLayer</span>
<span class="t" style="left:1752.5px;top:1052px;font-size:12px;color:#f0f0f0;">1:1</span>
<span class="t" style="left:1790.7px;top:1052px;font-size:12.4px;color:#f0f0f0;">405959, 175451</span>
<span class="t" style="left:1570.7px;top:600px;font-size:12px;color:#f0f0f0;">30°</span>
<span class="t" style="left:1451.2px;top:629px;font-size:12px;color:#ffffff;">2000</span>
<span class="l" style="left:1549.02px;top:651.46px;color:#1a1a1a">当前: 拉伸。按Ctrl切换修改方式</span>
<span class="l" style="left:907.73px;top:487.59px;font-size:29.15px;color:#f03535">输入长度后，按键盘tab键，切换输入角度</span>
<span class="l" style="left:1844.86px;top:48.51px;font-size:11px;color:#e0e0e0">?</span>
</div>
</body></html>
